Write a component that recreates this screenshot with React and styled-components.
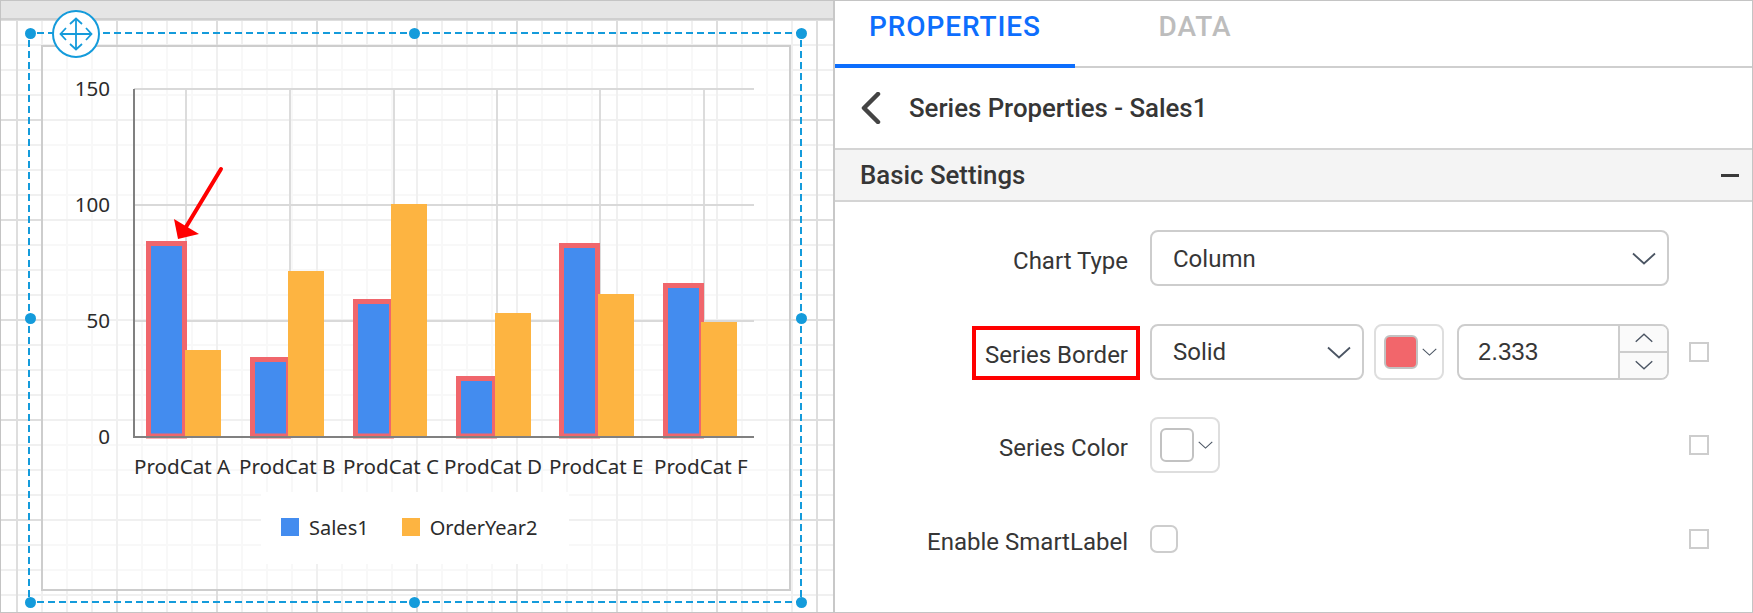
import React from 'react';
import styled, { createGlobalStyle } from 'styled-components';

const GlobalStyle = createGlobalStyle`
  html, body {
    margin: 0;
    padding: 0;
    background: #fff;
  }
  #root {
    width: 1753px;
    height: 613px;
  }
`;

const BLUE = '#149bdb';
const CHART_FONT = '"Noto Sans", "Open Sans", sans-serif';

const Page = styled.div`
  display: flex;
  width: 1753px;
  height: 613px;
  box-sizing: border-box;
  border: 1px solid #c4c4c4;
  overflow: hidden;
`;

const Designer = styled.div`
  width: 832px;
  flex: none;
  display: flex;
  flex-direction: column;
  border-right: 2px solid #c8c8c8;
`;

const Ruler = styled.div`
  height: 17px;
  flex: none;
  background: #e5e5e5;
  border-bottom: 2px solid #cfcfcf;
`;

const Canvas = styled.div`
  position: relative;
  flex: 1;
  padding: 25px 0 0 40px;
  background-color: #fff;
  background-image:
    linear-gradient(90deg, #dedede 2px, transparent 2px),
    linear-gradient(180deg, #dedede 2px, transparent 2px),
    linear-gradient(90deg, #f0f0f0 2px, transparent 2px),
    linear-gradient(180deg, #f0f0f0 2px, transparent 2px);
  background-size: 100px 100px, 100px 100px, 25px 25px, 25px 25px;
  background-position: 15px 0, 0 -1px, 15px 0, 0 -1px;
`;

const ChartFrame = styled.div`
  width: 750px;
  height: 546px;
  box-sizing: border-box;
  border: 2px solid #cdcdcd;
  background: rgba(255, 255, 255, 0.55);
  display: flex;
  flex-direction: column;
  align-items: center;
`;

const ChartSvg = styled.svg`
  display: block;
  flex: none;
`;

const AxisText = styled.text`
  font-family: ${CHART_FONT};
  font-size: 20.6px;
  fill: #2b2b2b;
`;

const Legend = styled.div`
  display: flex;
  align-items: center;
  gap: 33px;
  width: 308px;
  height: 72px;
  margin-right: 2px;
  box-sizing: border-box;
  padding: 0 0 2px 20px;
  background: #fff;
  font-family: ${CHART_FONT};
  font-size: 20px;
  color: #2b2b2b;
`;

const LegendItem = styled.div`
  display: flex;
  align-items: center;
  gap: 10px;
`;

const LegendSwatch = styled.span`
  width: 18px;
  height: 18px;
  background: ${(p) => p.$color};
`;

const DashedEdge = styled.div`
  position: absolute;
  ${(p) =>
    p.$vertical
      ? `top: ${p.$top}px; left: ${p.$left}px; width: 2px; height: ${p.$length}px;
         background: repeating-linear-gradient(180deg, ${BLUE} 0 7px, transparent 7px 11px);`
      : `top: ${p.$top}px; left: ${p.$left}px; height: 2px; width: ${p.$length}px;
         background: repeating-linear-gradient(90deg, ${BLUE} 0 7px, transparent 7px 11px);`}
`;

const Handle = styled.span`
  position: absolute;
  left: ${(p) => p.$x - 5.5}px;
  top: ${(p) => p.$y - 5.5}px;
  width: 11px;
  height: 11px;
  border-radius: 50%;
  background: ${BLUE};
`;

const MoveButton = styled.div`
  position: absolute;
  left: 51px;
  top: -10px;
  width: 48px;
  height: 48px;
  box-sizing: border-box;
  border: 2px solid ${BLUE};
  border-radius: 50%;
  background: #fff;
  display: flex;
  align-items: center;
  justify-content: center;
`;

const Panel = styled.div`
  flex: 1;
  display: flex;
  flex-direction: column;
  font-family: Roboto, sans-serif;
  color: #363636;
`;

const Tabs = styled.div`
  display: flex;
  height: 67px;
  flex: none;
  box-sizing: border-box;
  border-bottom: 2px solid #cfcfcf;
`;

const Tab = styled.div`
  width: ${(p) => p.$width}px;
  height: 67px;
  box-sizing: border-box;
  padding-top: 9px;
  text-align: center;
  font-size: 28px;
  line-height: 34px;
  font-weight: 500;
  letter-spacing: 0.9px;
  color: ${(p) => (p.$active ? '#0d6efd' : '#bdbdbd')};
  border-bottom: ${(p) => (p.$active ? '4px solid #0d6efd' : 'none')};
`;

const TitleRow = styled.div`
  display: flex;
  align-items: center;
  height: 82px;
  flex: none;
  box-sizing: border-box;
  padding-left: 26px;
  gap: 28px;
  border-bottom: 2px solid #d4d4d4;
`;

const Title = styled.div`
  font-size: 25.8px;
  font-weight: 500;
`;

const SectionHead = styled.div`
  display: flex;
  align-items: center;
  justify-content: space-between;
  height: 52px;
  flex: none;
  box-sizing: border-box;
  padding: 0 13px 0 25px;
  background: #f4f4f4;
  border-bottom: 2px solid #d4d4d4;
  font-size: 25.8px;
  font-weight: 500;
`;

const Collapse = styled.span`
  width: 18px;
  height: 3px;
  background: #3a3a3a;
`;

const Form = styled.div`
  display: flex;
  flex-direction: column;
  gap: 37.5px;
  padding-top: 28px;
`;

const Row = styled.div`
  display: grid;
  grid-template-columns: 293px 519px 20px;
  column-gap: 22px;
  align-items: center;
  height: 56px;
`;

const Label = styled.div`
  justify-self: end;
  padding-top: 6px;
  font-size: 24px;
  line-height: 28px;
  white-space: nowrap;
  ${(p) =>
    p.$boxed &&
    `position: relative;
     &::after {
       content: '';
       position: absolute;
       right: -12px;
       top: -9px;
       width: 168px;
       height: 54px;
       box-sizing: border-box;
       border: 4px solid #f00;
     }`}
`;

const Controls = styled.div`
  display: flex;
  align-items: center;
  gap: 10px;
`;

const Select = styled.div`
  display: flex;
  align-items: center;
  justify-content: space-between;
  width: ${(p) => p.$width}px;
  height: 56px;
  box-sizing: border-box;
  padding: 1px 11px 0 21px;
  border: 2px solid #cdcdcd;
  border-radius: 8px;
  font-size: 24px;
`;

const ColorPicker = styled.div`
  display: flex;
  align-items: center;
  width: 70px;
  height: 56px;
  box-sizing: border-box;
  padding-left: 8px;
  gap: 4px;
  border: 2px solid #dedede;
  border-radius: 8px;
`;

const Swatch = styled.span`
  width: 34px;
  height: 34px;
  box-sizing: border-box;
  border: 2px solid #c2c2c2;
  border-radius: 6px;
  background: ${(p) => p.$color};
`;

const NumberBox = styled.div`
  display: flex;
  width: 212px;
  height: 56px;
  margin-left: 3px;
  box-sizing: border-box;
  border: 2px solid #cdcdcd;
  border-radius: 8px;
  overflow: hidden;
  font-family: "Liberation Sans", Arial, sans-serif;
  font-size: 24px;
`;

const NumberValue = styled.div`
  flex: 1;
  display: flex;
  align-items: center;
  padding-left: 19px;
`;

const Spinner = styled.div`
  display: flex;
  flex-direction: column;
  width: 47px;
  border-left: 2px solid #cdcdcd;
  background: #fafafa;
`;

const SpinButton = styled.div`
  flex: 1;
  display: flex;
  align-items: center;
  justify-content: center;
  & + & {
    border-top: 2px solid #cdcdcd;
  }
`;

const SquareCheck = styled.span`
  justify-self: start;
  margin-left: -2px;
  width: 20px;
  height: 20px;
  box-sizing: border-box;
  border: 2px solid #cdcdcd;
`;

const RoundCheck = styled.span`
  display: block;
  width: 28px;
  height: 28px;
  box-sizing: border-box;
  border: 2px solid #cdcdcd;
  border-radius: 7px;
`;

const Chevron = ({ size = 24, dir = 'down' }) => (
  <svg width={size} height={Math.round(size * 0.55)} viewBox="0 0 24 13" fill="none">
    <path
      d={dir === 'down' ? 'M1 1.5 L12 11.5 L23 1.5' : 'M1 11.5 L12 1.5 L23 11.5'}
      stroke="#4b5563"
      strokeWidth="1.8"
    />
  </svg>
);

const MoveIcon = () => (
  <svg width="34" height="34" viewBox="0 0 34 34" fill="none" stroke={BLUE} strokeWidth="1.8">
    <path d="M17 1.5 V32.5 M1.5 17 H32.5" />
    <path d="M11 7 L17 1.5 L23 7 M11 27 L17 32.5 L23 27 M7 11 L1.5 17 L7 23 M27 11 L32.5 17 L27 23" />
  </svg>
);

const yTicks = [
  { label: '150', y: 89 },
  { label: '100', y: 205 },
  { label: '50', y: 321 },
  { label: '0', y: 437 },
];

const gridX = [186, 290, 394, 497, 600, 704];

const bars = [
  { name: 'ProdCat A', x: 146, top: 241, ox: 185, otop: 350, lx: 134 },
  { name: 'ProdCat B', x: 250, top: 357, ox: 288, otop: 271, lx: 239 },
  { name: 'ProdCat C', x: 353, top: 299, ox: 391, otop: 204, lx: 343 },
  { name: 'ProdCat D', x: 456, top: 376, ox: 495, otop: 313, lx: 444 },
  { name: 'ProdCat E', x: 559, top: 243, ox: 598, otop: 294, lx: 549 },
  { name: 'ProdCat F', x: 663, top: 283, ox: 701, otop: 322, lx: 654 },
];

// svg coordinates are page coordinates, shifted by the frame origin
const Chart = () => (
  <ChartSvg width="746" height="445" viewBox="43 47 746 445">
    {gridX.map((x) => (
      <line key={x} x1={x} x2={x} y1="89" y2="437" stroke="#dcdcdc" strokeWidth="2" />
    ))}
    {yTicks.slice(0, 3).map((t) => (
      <line key={t.label} x1="134" x2="754" y1={t.y} y2={t.y} stroke="#d9d9d9" strokeWidth="2" />
    ))}
    {yTicks.map((t) => (
      <AxisText key={t.label} x="110" y={t.y + 7} textAnchor="end">
        {t.label}
      </AxisText>
    ))}
    {bars.map((b) => (
      <g key={b.name}>
        <rect x={b.x + 2.5} y={b.top + 2.5} width="36" height={433.5 - b.top} fill="#438cef" stroke="#f0666c" strokeWidth="5" />
        <rect x={b.ox} y={b.otop} width="36" height={436 - b.otop} fill="#fdb441" />
        <AxisText x={b.lx} y="474">
          {b.name}
        </AxisText>
      </g>
    ))}
    <path d="M134 89 V437 H754" stroke="#808080" strokeWidth="2" fill="none" />
    <path d="M221 169 L186 227" stroke="#f00" strokeWidth="4" strokeLinecap="round" />
    <path d="M174 219 L199 234 L178 239 Z" fill="#f00" />
  </ChartSvg>
);

const handles = [
  [29, 13],
  [413, 13],
  [800, 13],
  [29, 298],
  [800, 298],
  [29, 582],
  [413, 582],
  [800, 582],
];

const App = () => (
  <Page>
    <GlobalStyle />
    <Designer>
      <Ruler />
      <Canvas>
        <ChartFrame>
          <Chart />
          <Legend>
            <LegendItem>
              <LegendSwatch $color="#438cef" />
              Sales1
            </LegendItem>
            <LegendItem>
              <LegendSwatch $color="#fdb441" />
              OrderYear2
            </LegendItem>
          </Legend>
        </ChartFrame>
        <DashedEdge $top={12} $left={36} $length={764} />
        <DashedEdge $top={581} $left={36} $length={764} />
        <DashedEdge $vertical $top={20} $left={27} $length={560} />
        <DashedEdge $vertical $top={20} $left={799} $length={560} />
        {handles.map(([x, y]) => (
          <Handle key={`${x}-${y}`} $x={x} $y={y} />
        ))}
        <MoveButton>
          <MoveIcon />
        </MoveButton>
      </Canvas>
    </Designer>
    <Panel>
      <Tabs>
        <Tab $active $width={240}>PROPERTIES</Tab>
        <Tab $width={240}>DATA</Tab>
      </Tabs>
      <TitleRow>
        <svg width="20" height="32" viewBox="0 0 20 32" fill="none">
          <path d="M17 2 L3 16 L17 30" stroke="#444" strokeWidth="4.5" strokeLinecap="round" strokeLinejoin="round" />
        </svg>
        <Title>Series Properties - Sales1</Title>
      </TitleRow>
      <SectionHead>
        Basic Settings
        <Collapse />
      </SectionHead>
      <Form>
        <Row>
          <Label>Chart Type</Label>
          <Select $width={519}>
            Column
            <Chevron />
          </Select>
        </Row>
        <Row>
          <Label $boxed>Series Border</Label>
          <Controls>
            <Select $width={214}>
              Solid
              <Chevron />
            </Select>
            <ColorPicker>
              <Swatch $color="#f2666b" />
              <Chevron size={15} />
            </ColorPicker>
            <NumberBox>
              <NumberValue>2.333</NumberValue>
              <Spinner>
                <SpinButton>
                  <Chevron size={18} dir="up" />
                </SpinButton>
                <SpinButton>
                  <Chevron size={18} />
                </SpinButton>
              </Spinner>
            </NumberBox>
          </Controls>
          <SquareCheck />
        </Row>
        <Row>
          <Label>Series Color</Label>
          <Controls>
            <ColorPicker>
              <Swatch $color="#fff" />
              <Chevron size={15} />
            </ColorPicker>
          </Controls>
          <SquareCheck />
        </Row>
        <Row>
          <Label>Enable SmartLabel</Label>
          <Controls>
            <RoundCheck />
          </Controls>
          <SquareCheck />
        </Row>
      </Form>
    </Panel>
  </Page>
);

export default App;
